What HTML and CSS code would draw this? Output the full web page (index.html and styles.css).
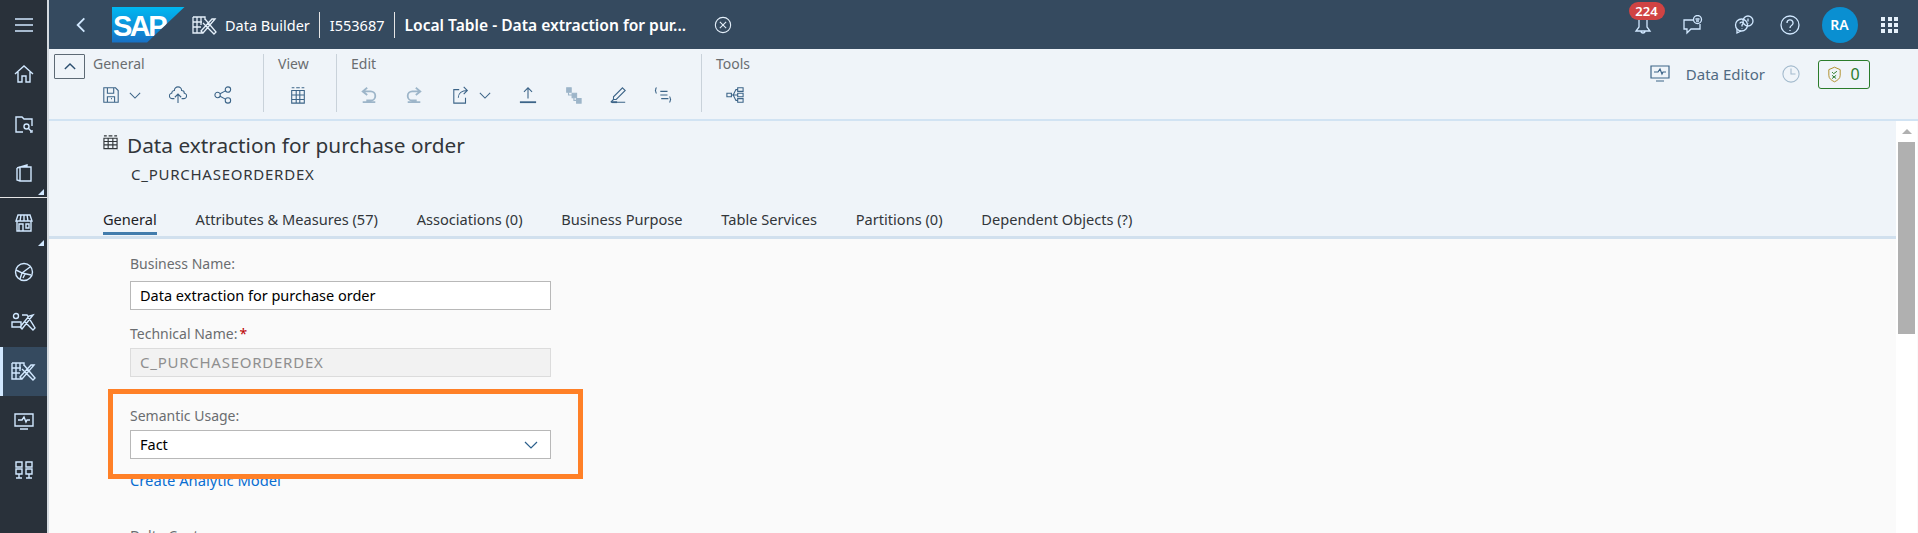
FILE: index.html
```html
<!DOCTYPE html>
<html lang="en">
<head>
    <meta charset="UTF-8">
    <meta name="viewport" content="width=device-width, initial-scale=1.0">
    <title>Data Builder</title>
    <link rel="stylesheet" href="styles.css">
</head>
<body>

    <nav class="sidebar">
        <a class="side-item">
            <svg class="side-icon" viewBox="0 0 20 20"><path d="M1 4h18M1 10h18M1 16h18"/></svg>
        </a>
        <a class="side-item">
            <svg class="side-icon" viewBox="0 0 20 20"><path d="M1 10l9-8 9 8M4 8v10h4v-6h4v6h4V8"/></svg>
        </a>
        <a class="side-item">
            <svg class="side-icon" viewBox="0 0 20 20"><path d="M9 18H2V3h6l2 2h8v7M18 16v2h-2"/><circle cx="12.500" cy="12.500" r="2.500"/><path d="M14.500 14.500l2.500 2.500"/></svg>
        </a>
        <a class="side-item side-item-split">
            <svg class="side-icon" viewBox="0 0 20 20"><path d="M3 5l10-3v2M3 5v12l3 1h11V4H6v14M3 5l3-1"/></svg>
            <span class="side-corner"></span>
        </a>
        <a class="side-item">
            <svg class="side-icon" viewBox="0 0 20 20"><path d="M4 2h12l2 6H2zM3 8v10h14V8M7 2L6 8M10 2v6M13 2l1 6M5 11h4v7H5zM12 11h3v4h-3z"/></svg>
            <span class="side-corner"></span>
        </a>
        <a class="side-item">
            <svg class="side-icon" viewBox="0 0 20 20"><circle cx="10" cy="10" r="8.500"/><path d="M2 8l6 3 8-6M8 11l-2 6M8 11l9 2M11 12l-2 4"/></svg>
        </a>
        <a class="side-item">
            <svg class="side-icon side-icon-wide" viewBox="0 0 26 20"><circle cx="5" cy="4" r="2.500"/><path d="M1 10h9v5H1zM11 3h5l8 13-2 2-9-9M22 3l-11 14-2-2 9-11z"/></svg>
        </a>
        <a class="side-item side-item-active">
            <svg class="side-icon side-icon-wide" viewBox="0 0 26 20"><path d="M1 2h12v3M1 2v16h10M1 7h9M1 12h8M5 2v16M9 2v8M13 4l11 13-2 2L11 8M23 4L11 18l-2-2L20 4z"/></svg>
        </a>
        <a class="side-item">
            <svg class="side-icon" viewBox="0 0 20 20"><path d="M1 3h18v12H1zM6 18h8M4 9h4l2-3 2 5 1-2h3"/></svg>
        </a>
        <a class="side-item">
            <svg class="side-icon" viewBox="0 0 20 20"><path d="M2 2h6v5H2zM12 2h6v5h-6zM2 9h6v5H2zM12 9h6v5h-6zM5 14v4M15 14v4M2 18h6M12 18h6"/></svg>
        </a>
    </nav>

    <div class="main">
        <header class="shell-bar">
            <svg class="back-icon" viewBox="0 0 12 20"><path d="M10 2l-8 8 8 8"/></svg>
            <div class="sap-logo"><span>SAP</span></div>
            <svg class="shell-icon" viewBox="0 0 26 20"><path d="M1 2h12v3M1 2v16h10M1 7h9M1 12h8M5 2v16M9 2v8M13 4l11 13-2 2L11 8M23 4L11 18l-2-2L20 4z"/></svg>
            <span class="crumb">Data Builder</span>
            <span class="crumb crumb-sep">I553687</span>
            <span class="crumb crumb-sep crumb-title">Local Table - Data extraction for pur...</span>
            <svg class="close-icon" viewBox="0 0 20 20"><circle cx="10" cy="10" r="8.500"/><path d="M6.500 6.500l7 7M13.500 6.500l-7 7"/></svg>

            <div class="shell-actions">
                <div class="bell">
                    <span class="badge">224</span>
                    <svg class="shell-btn" viewBox="0 0 20 20"><path d="M6 3v9l-3 4h14l-3-4V3M8 16a2 2 0 0 0 4 0"/></svg>
                </div>
                <svg class="shell-btn shell-btn-chat" viewBox="0 0 20 20"><path d="M10 5H1v9h3v4l4-4h9V9"/><circle cx="14.500" cy="4.500" r="4"/><path d="M12.500 4h4M13 6h3"/></svg>
                <svg class="shell-btn" viewBox="0 0 20 20"><circle cx="7.500" cy="10" r="6"/><path d="M3 14v4l4-2M6 8.500a1.500 1.500 0 1 1 2 1.500v1.500M8 13v.500"/><circle cx="14" cy="6" r="5"/><path d="M14 3.500v3M14 8v.500"/></svg>
                <svg class="shell-btn shell-btn-help" viewBox="0 0 20 20"><circle cx="10" cy="10" r="9"/><path d="M7 8a3 3 0 1 1 4.500 2.500c-1 .6-1.500 1-1.500 2.500M10 15v1"/></svg>
                <span class="avatar">RA</span>
                <div class="grid-icon">
                    <i></i><i></i><i></i><i></i><i></i><i></i><i></i><i></i><i></i>
                </div>
            </div>
        </header>

        <section class="toolbar">
            <button class="collapse-btn">
                <svg viewBox="0 0 14 10"><path d="M1 8l6-6 6 6"/></svg>
            </button>

            <div class="tool-group tool-group-general">
                <span class="group-label">General</span>
                <div class="tool-row">
                    <span class="tool tool-menu">
                        <svg viewBox="0 0 20 20"><path d="M2 2h13l3 3v13H2zM6 2v6h7V2M6 18v-6h8v6M10 14h1"/></svg>
                        <svg class="chev" viewBox="0 0 14 10"><path d="M1 2l6 6 6-6"/></svg>
                    </span>
                    <span class="tool">
                        <svg viewBox="0 0 20 20"><path d="M6 14H4a3 3 0 0 1-1-6 3 3 0 0 1 3-3 4 4 0 0 1 8 0 3 3 0 0 1 3 3 3 3 0 0 1-1 6h-2M10 19V9M6.500 12.500L10 9l3.500 3.500"/></svg>
                    </span>
                    <span class="tool">
                        <svg viewBox="0 0 20 20"><circle cx="4" cy="10" r="3"/><circle cx="15.500" cy="4" r="3"/><circle cx="15.500" cy="16" r="3"/><path d="M6.700 8.600l6-3.200M6.700 11.400l6 3.200"/></svg>
                    </span>
                </div>
            </div>

            <div class="tool-group tool-group-view">
                <span class="group-label">View</span>
                <div class="tool-row">
                    <span class="tool">
                        <svg viewBox="0 0 20 20"><path d="M3 5h14v14H3zM3 10h14M3 15h14M8 5v14M12 5v14M3 2h3M8 2h4M14 2h3"/></svg>
                    </span>
                </div>
            </div>

            <div class="tool-group tool-group-edit">
                <span class="group-label">Edit</span>
                <div class="tool-row">
                    <span class="tool tool-off">
                        <svg viewBox="0 0 20 20"><path d="M8 2L3 6l5 4M3 6h9a5 5 0 0 1 0 10H7M3 18h14" class="thick"/></svg>
                    </span>
                    <span class="tool tool-off">
                        <svg viewBox="0 0 20 20"><path d="M12 2l5 4-5 4M17 6H8a5 5 0 0 0 0 10h5M3 18h14" class="thick"/></svg>
                    </span>
                    <span class="tool tool-menu">
                        <svg viewBox="0 0 20 20"><path d="M8 4H2v15h13v-6M7 13c0-5 4-8 10-8M13 1l4 4-4 4"/></svg>
                        <svg class="chev" viewBox="0 0 14 10"><path d="M1 2l6 6 6-6"/></svg>
                    </span>
                    <span class="tool">
                        <svg viewBox="0 0 20 20"><path d="M10 14V2M5.500 6.500L10 2l4.500 4.500"/><path d="M1 18h18" class="thick"/></svg>
                    </span>
                    <span class="tool tool-off">
                        <svg viewBox="0 0 20 20"><path d="M3 2h5v5H3zM9 8h5v5H9zM14 14h5v5h-5z" class="solid"/><path d="M5 7v3h4M11 13v3h3"/></svg>
                    </span>
                    <span class="tool">
                        <svg viewBox="0 0 20 20"><path d="M15 2l3 3-10 10H5v-3zM2 18h16M5 15l-3 3"/><path d="M3 18h6" class="thick"/></svg>
                    </span>
                    <span class="tool">
                        <svg viewBox="0 0 20 20"><path d="M3 2C1 2 3 5 1 5c2 0 0 3 2 3M7 6h8M7 10h8M8 14h8M17 12c2 0 0 3 2 3-2 0 0 3-2 3"/></svg>
                    </span>
                </div>
            </div>

            <div class="tool-group tool-group-tools">
                <span class="group-label">Tools</span>
                <div class="tool-row">
                    <span class="tool">
                        <svg viewBox="0 0 20 20"><path d="M1 8h5v4H1zM13 2h6v4h-6zM13 8h6v4h-6zM13 14h6v4h-6zM6 10h7M13 4h-2l-3 6 3 6h2"/></svg>
                    </span>
                </div>
            </div>

            <div class="toolbar-right">
                <svg class="editor-icon" viewBox="0 0 20 20"><path d="M1 2h18v12H1zM6 17h8M4 8h4l2-3 2 5 1-2h3"/></svg>
                <span class="editor-label">Data Editor</span>
                <svg class="clock-icon" viewBox="0 0 20 20"><circle cx="10" cy="10" r="9"/><path d="M10 4v6h5"/></svg>
                <span class="status-btn">
                    <svg viewBox="0 0 16 20"><path class="shield-gold" d="M8 1l7 3v7c0 4-3 6-7 8-4-2-7-4-7-8V4z"/><path class="shield-green" d="M5 7l2 2 4-3M5 11l5 4M10 11l-5 4"/></svg>
                    <span>0</span>
                </span>
            </div>
        </section>

        <div class="workspace">
            <div class="pane">
                <div class="object-header">
                    <div class="object-title">
                        <svg class="table-icon" viewBox="0 0 16 16"><path d="M1 4h14v11H1zM1 7.500h14M1 11h14M5.500 4v11M10.500 4v11M1 1.500h3M6 1.500h4M12 1.500h3"/></svg>
                        <h1>Data extraction for purchase order</h1>
                    </div>
                    <p class="object-subtitle">C_PURCHASEORDERDEX</p>
                    <div class="tabs">
                        <a class="tab tab-active">General</a>
                        <a class="tab">Attributes &amp; Measures (57)</a>
                        <a class="tab">Associations (0)</a>
                        <a class="tab">Business Purpose</a>
                        <a class="tab">Table Services</a>
                        <a class="tab">Partitions (0)</a>
                        <a class="tab">Dependent Objects (?)</a>
                    </div>
                </div>

                <div class="content">
                    <div class="field field-first">
                        <label class="field-label">Business Name:</label>
                        <div class="input">Data extraction for purchase order</div>
                    </div>
                    <div class="field">
                        <label class="field-label">Technical Name:<span class="required">*</span></label>
                        <div class="input input-disabled">C_PURCHASEORDERDEX</div>
                    </div>
                    <div class="field field-semantic">
                        <label class="field-label">Semantic Usage:</label>
                        <div class="input input-select">
                            Fact
                            <svg viewBox="0 0 14 10"><path d="M1 2l6 6 6-6"/></svg>
                        </div>
                    </div>
                    <a class="link">Create Analytic Model</a>
                    <label class="field-label field-delta">Delta Capture</label>
                    <div class="highlight"></div>
                </div>
            </div>

            <div class="scrollbar">
                <span class="scroll-arrow"></span>
                <span class="scroll-thumb"></span>
            </div>
        </div>
    </div>

</body>
</html>
```

FILE: styles.css
```css
body {
    font-family: 'Noto Sans', sans-serif;
    margin: 0;
    padding: 0;
    height: 100vh;
    overflow: hidden;
    display: flex;
    background-color: #fafafa;
    color: #32363a;
    font-size: 14px;
}

svg {
    fill: none;
    stroke: currentColor;
    stroke-width: 1.2;
    flex-shrink: 0;
}

/* ---------- sidebar ---------- */

.sidebar {
    width: 47px;
    flex-shrink: 0;
    background-color: #29313a;
    border-right: 2px solid #d5dbe0;
    color: #d1e8ff;
}

.side-item {
    height: 49.5px;
    display: flex;
    align-items: center;
    justify-content: center;
    position: relative;
    box-sizing: border-box;
}

.side-item-split {
    border-bottom: 1px solid #e5e5e5;
}

.side-item-active {
    background-color: #354a5f;
    box-shadow: inset 3px 0 0 #d1e8ff;
}

.side-icon {
    width: 20px;
    height: 20px;
    stroke-width: 1.400;
}

.side-icon-wide {
    width: 26px;
}

.side-corner {
    position: absolute;
    right: 3px;
    bottom: 2px;
    border-left: 6px solid transparent;
    border-bottom: 6px solid #d1e8ff;
}

/* ---------- shell bar ---------- */

.main {
    flex: 1;
    min-width: 0;
    display: flex;
    flex-direction: column;
}

.shell-bar {
    height: 49px;
    flex-shrink: 0;
    background-color: #354a5f;
    color: #fff;
    display: flex;
    align-items: center;
    padding-left: 27px;
}

.back-icon {
    width: 10px;
    height: 18px;
    stroke: #d1e8ff;
    stroke-width: 2.200;
}

.sap-logo {
    width: 73px;
    height: 36px;
    margin-left: 26px;
    background: linear-gradient(#00b8f1, #1870c5);
    clip-path: polygon(0 0, 100% 0, 48% 100%, 0 100%);
}

.sap-logo span {
    display: block;
    font-family: 'Liberation Sans', sans-serif;
    font-weight: bold;
    font-size: 29px;
    line-height: 38px;
    letter-spacing: -2.500px;
    padding-left: 1px;
    color: #fff;
}

.shell-icon {
    width: 26px;
    height: 22px;
    margin-left: 7px;
    margin-right: 7px;
    stroke-width: 1.300;
    color: #e5f0fa;
}

.crumb {
    font-size: 14.500px;
    white-space: nowrap;
    color: #fff;
}

.crumb-sep {
    margin-left: 9px;
    padding-left: 10px;
    border-left: 1px solid #e5e5e5;
    line-height: 26px;
}

.crumb-title {
    font-size: 15.600px;
    font-weight: 600;
}

.close-icon {
    width: 18px;
    height: 18px;
    margin-left: 28px;
    color: #e5f0fa;
}

.shell-actions {
    margin-left: auto;
    display: flex;
    align-items: center;
    gap: 30px;
    padding-right: 20px;
    color: #d1e8ff;
}

.bell {
    position: relative;
    display: flex;
}

.badge {
    position: absolute;
    left: -4px;
    top: -13px;
    width: 36px;
    height: 18px;
    border-radius: 9px;
    background-color: #d04343;
    color: #fff;
    font-size: 13px;
    font-weight: 600;
    line-height: 18px;
    text-align: center;
}

.shell-btn {
    width: 20px;
    height: 20px;
    stroke-width: 1.300;
}

.shell-btn-chat {
    margin-right: 1px;
}

.shell-btn-help {
    margin-left: -4px;
}

.avatar {
    width: 36px;
    height: 36px;
    margin-left: -8px;
    border-radius: 50%;
    background-color: #0a8fd1;
    color: #fff;
    font-weight: 600;
    font-size: 14px;
    line-height: 36px;
    text-align: center;
}

.grid-icon {
    width: 17px;
    display: grid;
    grid-template-columns: repeat(3, 4px);
    gap: 2px 2.500px;
    margin-left: -6.500px;
}

.grid-icon i {
    height: 4px;
    background-color: #e5f0fa;
}

/* ---------- toolbar ---------- */

.toolbar {
    height: 70px;
    flex-shrink: 0;
    background-color: #eff4f9;
    border-bottom: 2px solid #d1e3f3;
    display: flex;
    position: relative;
    color: #3c6488;
}

.collapse-btn {
    width: 31px;
    height: 25px;
    margin: 5px 0 0 5px;
    padding: 0;
    background-color: transparent;
    border: 1px solid #5d6a75;
    border-radius: 1px;
    color: #2b4f70;
    display: flex;
    align-items: center;
    justify-content: center;
}

.collapse-btn svg {
    width: 12px;
    height: 9px;
    stroke-width: 1.600;
}

.tool-group {
    height: 58px;
    margin-top: 5px;
    display: flex;
    flex-direction: column;
}

.tool-group-general {
    width: 170px;
    margin-left: 8px;
}

.tool-group-view,
.tool-group-edit,
.tool-group-tools {
    border-left: 1px solid #c9d2da;
    padding-left: 14px;
}

.tool-group-view {
    width: 58px;
}

.tool-group-edit {
    width: 350px;
}

.group-label {
    color: #6a6d70;
    font-size: 14px;
    line-height: 19px;
    height: 19px;
}

.tool-row {
    display: flex;
    align-items: center;
    margin-top: 12px;
}

.tool-group-general .tool-row {
    margin-left: -6.500px;
}

.tool-group-view .tool-row {
    margin-left: -3px;
}

.tool-group-edit .tool-row {
    margin-left: -5px;
}

.tool-group-tools .tool-row {
    margin-left: -4px;
}

.tool {
    width: 45px;
    height: 20px;
    display: flex;
    align-items: center;
    justify-content: center;
}

.tool svg {
    width: 18px;
    height: 18px;
}

.tool-menu {
    width: 69px;
    justify-content: flex-start;
    padding-left: 15.500px;
    box-sizing: border-box;
}

.tool .chev {
    width: 12px;
    height: 9px;
    margin-left: 9px;
}

.tool-off {
    color: #9db5c9;
}

.thick {
    stroke-width: 2;
}

.solid {
    fill: currentColor;
}

.toolbar-right {
    margin-left: auto;
    display: flex;
    align-items: center;
    height: 50px;
    padding-right: 48px;
}

.editor-icon {
    width: 20px;
    height: 20px;
}

.editor-label {
    margin-left: 16px;
    font-size: 15px;
    color: #516a82;
}

.clock-icon {
    width: 18px;
    height: 18px;
    margin-left: 17px;
    color: #a3bacd;
}

.status-btn {
    width: 52px;
    height: 29px;
    margin-left: 18px;
    box-sizing: border-box;
    border: 1px solid #2b7c2b;
    border-radius: 3px;
    display: flex;
    align-items: center;
    justify-content: center;
    gap: 9px;
    color: #2b7c2b;
    font-size: 16px;
}

.status-btn svg {
    width: 13px;
    height: 17px;
}

.shield-gold {
    stroke: #b0902c;
}

.shield-green {
    stroke: #2b7c2b;
}

/* ---------- object page ---------- */

.workspace {
    flex: 1;
    min-height: 0;
    display: flex;
}

.pane {
    flex: 1;
    min-width: 0;
    overflow: hidden;
}

.object-header {
    height: 118px;
    box-sizing: border-box;
    background-color: #eff4f9;
    border-bottom: 3px solid #d1e0ee;
    padding: 9px 0 0 54px;
    position: relative;
}

.object-title {
    display: flex;
    align-items: center;
    gap: 9px;
}

.table-icon {
    width: 15px;
    height: 16px;
    margin-top: -6px;
    color: #32363a;
}

h1 {
    margin: 0;
    font-size: 20.800px;
    font-weight: 400;
    line-height: 30px;
    color: #32363a;
}

.object-subtitle {
    margin: 4px 0 0 28px;
    line-height: 20px;
    font-size: 15px;
    letter-spacing: 0.750px;
    color: #32363a;
}

.tabs {
    display: flex;
    gap: 38.800px;
    margin-top: 25px;
}

.tab {
    height: 23px;
    line-height: 20px;
    font-size: 14.600px;
    color: #32363a;
    white-space: nowrap;
}

.tab-active {
    color: #1d2125;
    border-bottom: 3px solid #427cac;
}

.content {
    padding: 15px 0 0 81px;
    position: relative;
}

.field {
    width: 421px;
    margin-bottom: 14px;
}

.field-label {
    display: block;
    height: 19px;
    line-height: 19px;
    margin-bottom: 5px;
    color: #6a6d70;
    font-size: 14px;
}

.field-first .field-label {
    margin-bottom: 8px;
}

.required {
    color: #bb0000;
    margin-left: 2px;
}

.input {
    height: 29px;
    box-sizing: border-box;
    border: 1px solid #b8b8b8;
    background-color: #fff;
    padding: 0 9px 2px;
    font-size: 14.500px;
    color: #000;
    display: flex;
    align-items: center;
    justify-content: space-between;
}

.input-disabled {
    background-color: #f2f2f2;
    border-color: #dcdcdc;
    color: #8f8f8f;
    font-size: 15px;
    letter-spacing: 0.750px;
}

.input-select svg {
    width: 14px;
    height: 10px;
    margin-right: 3px;
    margin-top: 2px;
    color: #2b5f8c;
}

.field-semantic {
    margin-top: 29px;
}

.link {
    display: block;
    margin-top: -2px;
    color: #0a6ed1;
    font-size: 14.750px;
    line-height: 19px;
}

.field-delta {
    margin-top: 36px;
}

.highlight {
    position: absolute;
    left: 59px;
    top: 150px;
    width: 475px;
    height: 90px;
    box-sizing: border-box;
    border: 5px solid #ff8027;
}

/* ---------- scrollbar ---------- */

.scrollbar {
    width: 21px;
    flex-shrink: 0;
    margin-right: 1px;
    background-color: #fff;
    display: flex;
    flex-direction: column;
    align-items: center;
}

.scroll-arrow {
    margin-top: 8px;
    border-left: 5px solid transparent;
    border-right: 5px solid transparent;
    border-bottom: 5px solid #b0b0b0;
}

.scroll-thumb {
    width: 17px;
    height: 192px;
    margin-top: 8px;
    background-color: #b0b0b0;
}
```
